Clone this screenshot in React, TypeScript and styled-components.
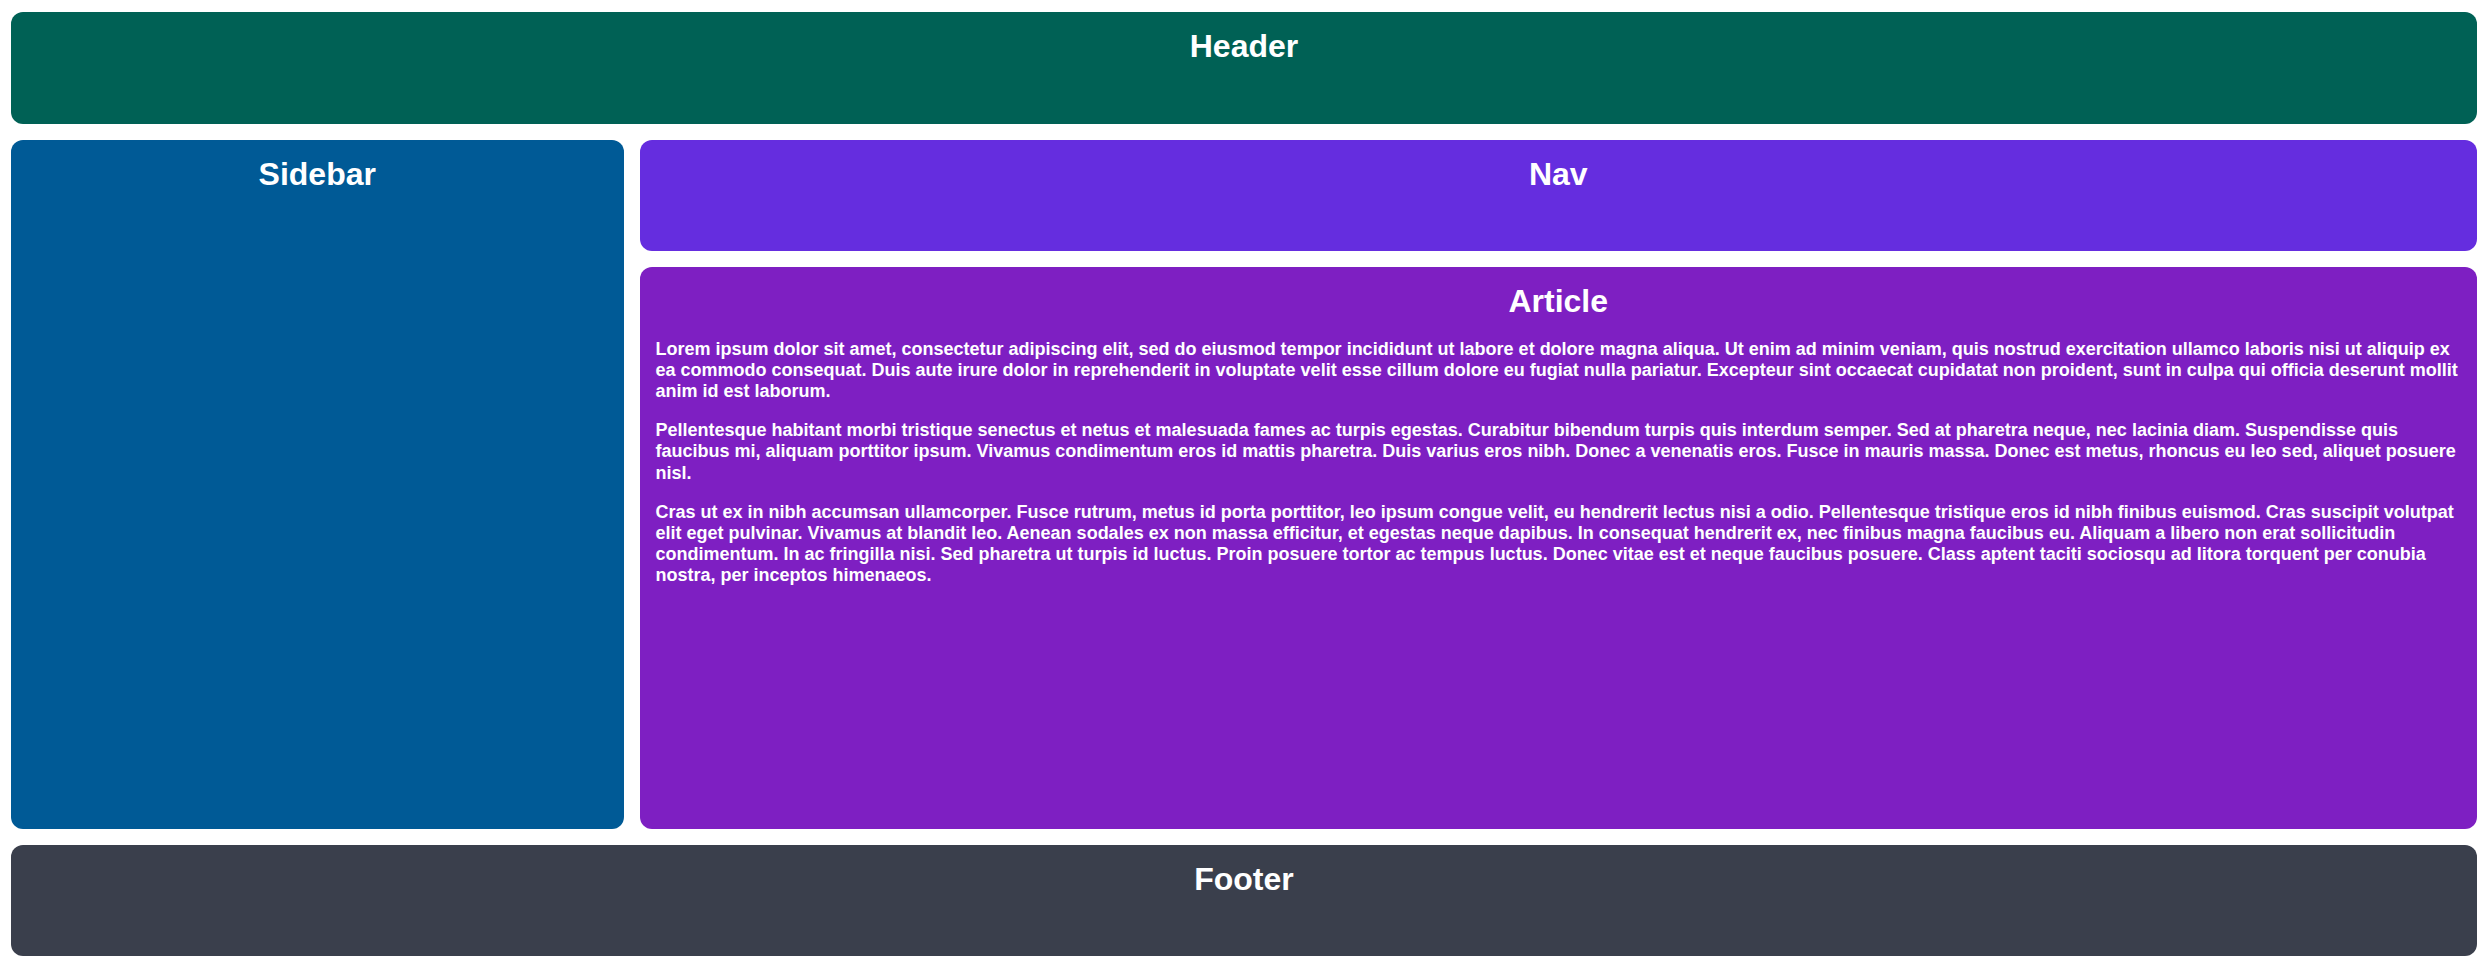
import React from "react";
import styled, { createGlobalStyle } from "styled-components";

const Global = createGlobalStyle`
  html, body { margin: 0; padding: 0; background: #ffffff; }
  body { font-family: "Liberation Sans", Arial, sans-serif; }
  * { box-sizing: border-box; }
`;

const Page = styled.div`
  height: 966px;
  padding: 12px 11px 10px;
  display: grid;
  grid-template-rows: 112px 1fr 111px;
  gap: 16px;
`;

const Middle = styled.div`
  display: grid;
  grid-template-columns: 1fr 3fr;
  gap: 16px;
  min-height: 0;
`;

const Main = styled.div`
  display: grid;
  grid-template-rows: 111px 1fr;
  gap: 16px;
  min-height: 0;
`;

const Panel = styled.section<{ $bg: string }>`
  background: ${(p) => p.$bg};
  color: #ffffff;
  border-radius: 12px;
  padding: 16px;
  overflow: hidden;
`;

const Title = styled.h1`
  margin: 0;
  font-size: 32px;
  font-weight: 700;
  line-height: normal;
  text-align: center;
`;

const Para = styled.p`
  margin: 18.5px 0 0;
  font-size: 18px;
  font-weight: 700;
  line-height: 21.2px;
  & + & {
    margin-top: 18px;
  }
`;

const paragraphs = [
  "Lorem ipsum dolor sit amet, consectetur adipiscing elit, sed do eiusmod tempor incididunt ut labore et dolore magna aliqua. Ut enim ad minim veniam, quis nostrud exercitation ullamco laboris nisi ut aliquip ex ea commodo consequat. Duis aute irure dolor in reprehenderit in voluptate velit esse cillum dolore eu fugiat nulla pariatur. Excepteur sint occaecat cupidatat non proident, sunt in culpa qui officia deserunt mollit anim id est laborum.",
  "Pellentesque habitant morbi tristique senectus et netus et malesuada fames ac turpis egestas. Curabitur bibendum turpis quis interdum semper. Sed at pharetra neque, nec lacinia diam. Suspendisse quis faucibus mi, aliquam porttitor ipsum. Vivamus condimentum eros id mattis pharetra. Duis varius eros nibh. Donec a venenatis eros. Fusce in mauris massa. Donec est metus, rhoncus eu leo sed, aliquet posuere nisl.",
  "Cras ut ex in nibh accumsan ullamcorper. Fusce rutrum, metus id porta porttitor, leo ipsum congue velit, eu hendrerit lectus nisi a odio. Pellentesque tristique eros id nibh finibus euismod. Cras suscipit volutpat elit eget pulvinar. Vivamus at blandit leo. Aenean sodales ex non massa efficitur, et egestas neque dapibus. In consequat hendrerit ex, nec finibus magna faucibus eu. Aliquam a libero non erat sollicitudin condimentum. In ac fringilla nisi. Sed pharetra ut turpis id luctus. Proin posuere tortor ac tempus luctus. Donec vitae est et neque faucibus posuere. Class aptent taciti sociosqu ad litora torquent per conubia nostra, per inceptos himenaeos.",
];

export default function App() {
  return (
    <>
      <Global />
      <Page>
        <Panel as="header" $bg="#006155">
          <Title>Header</Title>
        </Panel>
        <Middle>
          <Panel as="aside" $bg="#005a96">
            <Title>Sidebar</Title>
          </Panel>
          <Main>
            <Panel as="nav" $bg="#652ddf">
              <Title>Nav</Title>
            </Panel>
            <Panel as="article" $bg="#7e1fc2">
              <Title>Article</Title>
              {paragraphs.map((t, i) => (
                <Para key={i}>{t}</Para>
              ))}
            </Panel>
          </Main>
        </Middle>
        <Panel as="footer" $bg="#3a3f4c">
          <Title>Footer</Title>
        </Panel>
      </Page>
    </>
  );
}
